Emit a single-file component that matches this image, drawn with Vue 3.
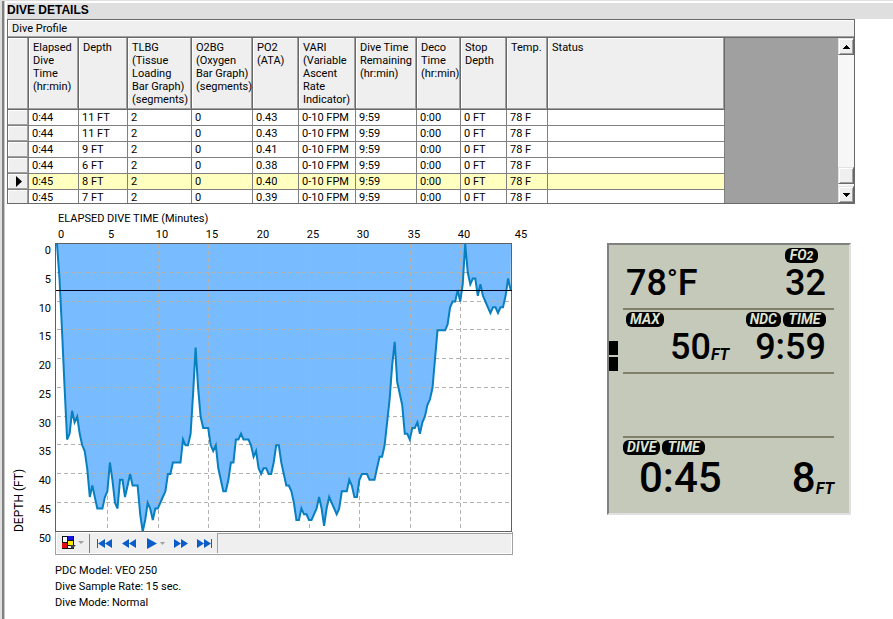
<script setup>
import { computed } from 'vue'

const columns = [
  { label: 'Elapsed\nDive\nTime\n(hr:min)', width: 50 },
  { label: 'Depth', width: 49 },
  { label: 'TLBG\n(Tissue\nLoading\nBar Graph)\n(segments)', width: 64 },
  { label: 'O2BG\n(Oxygen\nBar Graph)\n(segments)', width: 61 },
  { label: 'PO2\n(ATA)', width: 46 },
  { label: 'VARI\n(Variable\nAscent\nRate\nIndicator)', width: 57 },
  { label: 'Dive Time\nRemaining\n(hr:min)', width: 61 },
  { label: 'Deco\nTime\n(hr:min)', width: 44 },
  { label: 'Stop\nDepth', width: 46 },
  { label: 'Temp.', width: 41 },
  { label: 'Status', width: 177 }
]

const readings = [
  ['0:44', '11 FT', '0.43'],
  ['0:44', '11 FT', '0.43'],
  ['0:44', '9 FT', '0.41'],
  ['0:44', '6 FT', '0.38'],
  ['0:45', '8 FT', '0.40'],
  ['0:45', '7 FT', '0.39']
]
const current = 4
const rows = readings.map(([time, depth, po2]) => [
  time, depth, '2', '0', po2, '0-10 FPM', '9:59', '0:00', '0 FT', '78 F', ''
])

// Depth in feet, one sample every 15 seconds
const depths = [
  0, 6, 15, 25, 34, 33, 29, 31, 30, 33, 35, 36, 39, 44, 42, 44, 46, 46, 46, 44,
  43, 38, 41, 45, 46, 41, 41, 44, 42, 40, 42, 42, 42, 47, 50, 48, 45, 46, 48, 46,
  46, 45, 44, 43, 40, 40, 38, 38, 38, 38, 34, 35, 35, 33, 26, 18, 25, 30, 32, 32,
  32, 35, 36, 35, 39, 41, 43, 43, 41, 38, 38, 34, 34, 33, 34, 34, 34, 35, 37, 36,
  39, 40, 39, 39, 40, 40, 38, 35, 35, 38, 40, 42, 42, 43, 45, 48, 48, 46, 47, 47,
  48, 48, 47, 46, 44, 46, 49, 46, 44, 45, 46, 47, 46, 43, 43, 43, 41, 42, 44, 44,
  41, 40, 40, 40, 41, 41, 41, 39, 37, 37, 35, 31, 27, 21, 17, 24, 26, 28, 33, 33,
  34, 32, 32, 31, 33, 31, 30, 28, 27, 25, 20, 15, 15, 15, 15, 14, 11, 10, 10, 8,
  10, 7, 0, 5, 7, 6, 6, 9, 7, 9, 10, 11, 12, 11, 11, 12, 11, 11, 9, 6, 8
]

const sx = (minutes) => 47 + Math.round(minutes * 10.08)
const sy = (feet) => 39 + feet * 5.75
const line = computed(() =>
  depths.map((d, i) => `${(47 + i * 2.52).toFixed(1)},${sy(d).toFixed(1)}`).join(' ')
)
const area = computed(() => `47,39 ${line.value} 501,39`)
const minutes = [0, 5, 10, 15, 20, 25, 30, 35, 40, 45]
const feet = [0, 5, 10, 15, 20, 25, 30, 35, 40, 45, 50]
</script>

<template>
  <main class="window">
    <h1 class="title">DIVE DETAILS</h1>

    <section class="panel">
      <h2 class="caption">Dive Profile</h2>
      <div class="grid-area">
        <table class="grid">
          <colgroup>
            <col class="selector-col" />
            <col v-for="c in columns" :key="c.label" :style="{ width: c.width + 'px' }" />
          </colgroup>
          <thead>
            <tr>
              <th></th>
              <th v-for="c in columns" :key="c.label" scope="col">{{ c.label }}</th>
            </tr>
          </thead>
          <tbody>
            <tr v-for="(row, r) in rows" :key="r" :class="{ current: r === current }">
              <td class="selector">
                <svg v-if="r === current" width="6" height="11" viewBox="0 0 6 11"><path d="M0 0L6 5.5L0 11Z" /></svg>
              </td>
              <td v-for="(cell, c) in row" :key="c">{{ cell }}</td>
            </tr>
          </tbody>
        </table>
        <div class="scrollbar">
          <button class="bevel" aria-label="Scroll up">
            <svg width="7" height="4" viewBox="0 0 7 4"><path d="M3 0h1v1h1v1h1v1h1v1H0V3h1V2h1V1h1z" /></svg>
          </button>
          <div class="track"><div class="bevel thumb"></div></div>
          <button class="bevel" aria-label="Scroll down">
            <svg width="7" height="4" viewBox="0 0 7 4"><path d="M0 0h7v1H6v1H5v1H4v1H3V3H2V2H1V1H0z" /></svg>
          </button>
        </div>
      </div>
    </section>

    <div class="lower">
      <section class="profile">
        <svg class="chart" width="520" height="327" viewBox="0 0 520 327">
          <text x="48" y="17">ELAPSED DIVE TIME (Minutes)</text>
          <text v-for="m in minutes" :key="m" :x="sx(m) + (m === 45 ? 10 : 4)" y="33" text-anchor="middle">{{ m }}</text>
          <text v-for="f in feet" :key="f" x="41" :y="Math.round(sy(f)) + 10" text-anchor="end">{{ f }}</text>
          <text class="axis-title" transform="translate(13 327) rotate(-90)" x="0" y="0">DEPTH (FT)</text>
          <rect class="plot-bg" x="46" y="38" width="456" height="289" />
          <polygon class="water" :points="area" />
          <g class="gridlines">
            <line v-for="m in minutes.slice(1, 9)" :key="'v' + m" :x1="sx(m) + 0.5" :x2="sx(m) + 0.5" y1="39" y2="325" />
            <line v-for="f in feet.slice(1, 10)" :key="'h' + f" x1="47" x2="501" :y1="Math.round(sy(f)) - 0.5" :y2="Math.round(sy(f)) - 0.5" />
          </g>
          <polyline class="trace" :points="line" />
          <rect class="plot-frame" x="45.5" y="38.5" width="456" height="288" />
          <line class="marker" x1="46" x2="502" y1="85.5" y2="85.5" />
        </svg>

        <div class="toolbar">
          <button aria-label="Colors" class="colors">
            <svg width="24" height="16" viewBox="0 0 24 16">
              <rect x="1" y="1" width="12" height="13" fill="#111" />
              <rect x="2" y="2" width="4" height="5" fill="#fff" />
              <rect x="7" y="1" width="5" height="4" fill="#1414d8" />
              <rect x="7" y="6" width="5" height="4" fill="#ffe800" />
              <rect x="1" y="8" width="5" height="5" fill="#e01010" />
              <rect x="7" y="11" width="3" height="2" fill="#fff" />
              <path class="corner" d="M9 10h6l-4 4z" />
              <path class="caret" d="M17 6h6l-3 3z" />
            </svg>
          </button>
          <span class="divider"></span>
          <button aria-label="First">
            <svg width="16" height="9" viewBox="0 0 16 9"><path d="M0 0h1v9H0zM8 0v9L1 4.5zM15 0v9L8 4.5z" /></svg>
          </button>
          <button aria-label="Rewind">
            <svg width="16" height="9" viewBox="0 0 16 9"><path d="M8 0v9L1 4.5zM15 0v9L8 4.5z" /></svg>
          </button>
          <button aria-label="Play" class="play">
            <svg width="20" height="11" viewBox="0 0 20 11">
              <path d="M2 0L12 5.5L2 11z" /><path class="caret" d="M15 4h5l-2.500 3z" />
            </svg>
          </button>
          <button aria-label="Fast forward">
            <svg width="16" height="9" viewBox="0 0 16 9"><path d="M1 0v9L8 4.5zM8 0v9L15 4.5z" /></svg>
          </button>
          <button aria-label="Last">
            <svg width="16" height="9" viewBox="0 0 16 9"><path d="M0 0v9L7 4.5zM7 0v9L14 4.5zM14 0h1v9h-1z" /></svg>
          </button>
          <span class="well"></span>
        </div>

        <div class="facts">
          <p>PDC Model: VEO 250</p>
          <p>Dive Sample Rate: 15 sec.</p>
          <p>Dive Mode: Normal</p>
        </div>
      </section>

      <section class="lcd">
        <div class="bars"><i></i><i></i></div>
        <div class="zone">
          <div class="badges end"><span class="badge">FO<small>2</small></span></div>
          <div class="values"><span class="digits">78<sup class="deg">°</sup>F</span><span class="digits">32</span></div>
        </div>
        <div class="zone">
          <div class="badges"><span class="badge">MAX</span><span class="gap"></span><span class="badge">NDC</span><span class="badge wide">TIME</span></div>
          <div class="values depth"><span class="digits">50</span><span class="unit">FT</span><span class="gap"></span><span class="digits">9:59</span></div>
        </div>
        <div class="zone"></div>
        <div class="zone last">
          <div class="badges"><span class="badge">DIVE</span><span class="badge wide">TIME</span></div>
          <div class="values large"><span class="digits">0:45</span><span class="gap"></span><span class="digits">8</span><span class="unit">FT</span></div>
        </div>
      </section>
    </div>
  </main>
</template>

<style>
body {
  background: #fff;
}
</style>

<style scoped>
* {
  box-sizing: border-box;
}
.window {
  min-height: 100vh;
  padding-left: 7px;
  border-top: 1px solid #dfdfdf;
  background: linear-gradient(90deg, #dfdfdf 2px, #808080 2px, #808080 4px, #c8c8c8 4px, #c8c8c8 5px, #fff 5px);
  color: #000;
  font: 11px/16px Roboto, "Liberation Sans", sans-serif;
}
h1, h2, p {
  margin: 0;
}
button {
  display: flex;
  align-items: center;
  justify-content: center;
  padding: 0;
  border: 0;
  background: none;
}
.title {
  border-top: 2px solid #fff;
  background: #dfdfdf;
  font: bold 12px/14px "Liberation Sans", Arial, sans-serif;
  padding-bottom: 2px;
}
.panel {
  margin-right: 38px;
  border: 1px solid #696969;
  line-height: 13px;
}
.caption {
  height: 18px;
  padding-left: 4px;
  border-bottom: 1px solid #696969;
  background: #efefef;
  box-shadow: inset 0 -1px #a0a0a0, inset 1px 1px #fff;
  font: inherit;
  line-height: 18px;
}
.grid-area {
  display: flex;
  justify-content: space-between;
  height: 165px;
  overflow: hidden;
  background: #a0a0a0;
}
.grid {
  width: 717px;
  table-layout: fixed;
  border-collapse: separate;
  border-spacing: 0;
  background: #fff;
}
.selector-col {
  width: 21px;
}
th {
  height: 72px;
  padding: 3px 0 0 4px;
  border: solid #696969;
  border-width: 0 1px 1px 0;
  background: #efefef;
  box-shadow: inset -1px -1px #a0a0a0, inset 1px 1px #fff;
  font-weight: normal;
  text-align: left;
  vertical-align: top;
  white-space: pre;
}
td {
  height: 16px;
  padding: 2px 0 0 3px;
  border: solid #808080;
  border-width: 0 1px 1px 0;
  line-height: 12px;
  vertical-align: top;
  white-space: nowrap;
}
.current td {
  background: #ffffbf;
}
td.selector, .current td.selector {
  padding: 2px 6px 0 8px;
  background: #efefef;
  box-shadow: inset -1px -1px #a0a0a0, inset 1px 1px #fff;
}
.selector svg {
  display: block;
}
.scrollbar {
  display: flex;
  flex-direction: column;
  width: 16px;
}
.bevel {
  flex: none;
  height: 17px;
  border: 1px solid;
  border-color: #e3e3e3 #696969 #696969 #e3e3e3;
  background: #efefef;
  box-shadow: inset 1px 1px #fff, inset -1px -1px #a0a0a0;
}
.track {
  display: flex;
  flex: 1;
  flex-direction: column;
  justify-content: flex-end;
  padding-bottom: 2px;
  background: #f7f7f7;
}
.lower {
  display: flex;
  justify-content: space-between;
  align-items: flex-start;
  padding: 1px 42px 0 3px;
}
.chart {
  display: block;
  overflow: visible;
}
.axis-title {
  font-size: 12px;
}
.plot-bg {
  fill: #fff;
}
.water {
  fill: #79bbff;
}
.gridlines {
  stroke: #b2b2b2;
  stroke-dasharray: 4 3;
}
.trace {
  fill: none;
  stroke: #087fbe;
  stroke-width: 2;
}
.plot-frame {
  fill: none;
  stroke: #606060;
}
.marker {
  stroke: #000018;
}
.toolbar {
  display: flex;
  align-items: center;
  width: 458px;
  height: 23px;
  margin-left: 45px;
  border: 1px solid #a0a0a0;
  border-top: 0;
  background: #efefef;
  box-shadow: inset 1px 1px #fff, inset -1px -1px #fff;
}
.toolbar button {
  width: 24px;
  height: 20px;
}
.toolbar .colors {
  width: 33px;
}
.toolbar .play {
  width: 28px;
}
.toolbar path {
  fill: #0a5cc8;
}
.toolbar path.caret {
  fill: #a0a0a0;
}
.toolbar path.corner {
  fill: #444;
}
.divider {
  width: 1px;
  height: 19px;
  margin-right: 3px;
  background: #808080;
}
.well {
  flex: 1;
  height: 20px;
  border: solid #a0a0a0;
  border-width: 1px 0 0 1px;
}
.facts {
  margin: 8px 0 0 45px;
}
.lcd {
  position: relative;
  width: 244px;
  margin-top: 38px;
  padding: 1px 15px 0 14px;
  border: 2px solid;
  border-color: #808080 #e0e0e0 #e0e0e0 #808080;
  background: #c4c9b9;
}
.bars {
  position: absolute;
  top: 96px;
  left: 0;
  display: grid;
  gap: 2px;
}
.bars i {
  width: 9px;
  height: 14px;
  background: #000;
}
.zone {
  height: 64px;
  padding: 2px 8px 0 3px;
  border-bottom: 2px solid #81806b;
}
.last {
  height: 75px;
  padding: 2px 0 0;
  border: 0;
}
.badges {
  display: flex;
  gap: 2px;
}
.end {
  justify-content: flex-end;
  padding-right: 8px;
}
.badge {
  min-width: 33px;
  height: 15px;
  padding: 0 4px;
  border-radius: 6px;
  background: #000;
  color: #dfe3d3;
  font: italic bold 14px/15px Roboto, "Liberation Sans", sans-serif;
  text-align: center;
}
.wide {
  min-width: 43px;
}
.badge small {
  font-size: 12px;
}
.gap {
  flex: 1;
}
.values {
  display: flex;
  align-items: flex-end;
  justify-content: space-between;
  margin-top: 4px;
}
.digits {
  font: 500 36px/32px Roboto, "Liberation Sans", sans-serif;
}
.deg {
  font-size: 28px;
  line-height: 0;
  vertical-align: 6px;
}
.depth {
  padding-left: 44px;
}
.unit {
  font: italic bold 16px/16px Roboto, "Liberation Sans", sans-serif;
}
.large {
  padding-left: 16px;
}
.large .digits {
  font-size: 42px;
  line-height: 38px;
}
</style>
